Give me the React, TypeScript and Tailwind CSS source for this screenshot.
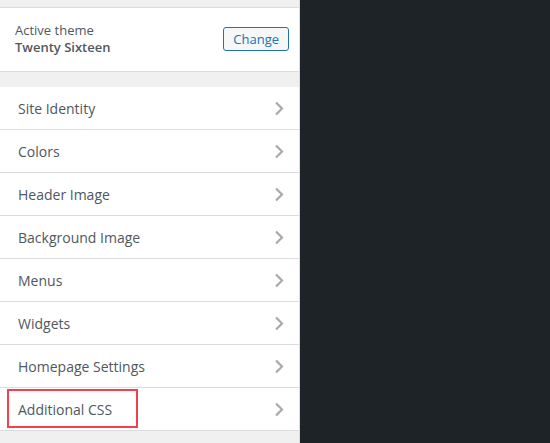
const sections = [
  'Site Identity',
  'Colors',
  'Header Image',
  'Background Image',
  'Menus',
  'Widgets',
  'Homepage Settings',
  'Additional CSS',
];

function Chevron() {
  return (
    <svg width="10" height="15" viewBox="0 0 10 15" className="shrink-0">
      <path d="M2 1.5 L8 7.5 L2 13.5" fill="none" stroke="#a7aaad" strokeWidth="2.2" />
    </svg>
  );
}

export default function App() {
  return (
    <div
      className="flex w-[550px] h-[443px] overflow-hidden bg-[#1d2327]"
      style={{ fontFamily: '"Open Sans", "Noto Sans", sans-serif' }}
    >
      <div className="w-[300px] h-full shrink-0 bg-[#f0f0f1] border-r border-[#dcdcde] flex flex-col">
        <div className="h-[7px] shrink-0" />
        {/* Active theme */}
        <div className="h-[65px] shrink-0 bg-white border-y border-[#dcdcde] flex items-center justify-between pl-[15px] pr-[10px]">
          <div className="flex flex-col leading-[17px] text-[13px] text-[#50575e] -mt-[2px]">
            <span>Active theme</span>
            <span className="font-semibold">Twenty Sixteen</span>
          </div>
          <button className="h-[24px] px-[9px] rounded-[3px] border border-[#2271b1] bg-[#f6f7f7] text-[#2271b1] text-[13px] leading-none -mt-[1px]">
            Change
          </button>
        </div>
        <div className="h-[15px] shrink-0" />
        {sections.map((name) => (
          <div
            key={name}
            className="h-[43px] shrink-0 bg-white border-b border-[#dcdcde] flex items-center justify-between pl-[18px] pr-[15px] relative"
          >
            <span className="text-[14px] text-[#50575e]">{name}</span>
            <Chevron />
            {name === 'Additional CSS' && (
              <div className="absolute left-[7px] top-[1px] w-[131px] h-[39px] border-2 border-[#f43f4d] pointer-events-none" />
            )}
          </div>
        ))}
      </div>
      <div className="flex-1" />
    </div>
  );
}
